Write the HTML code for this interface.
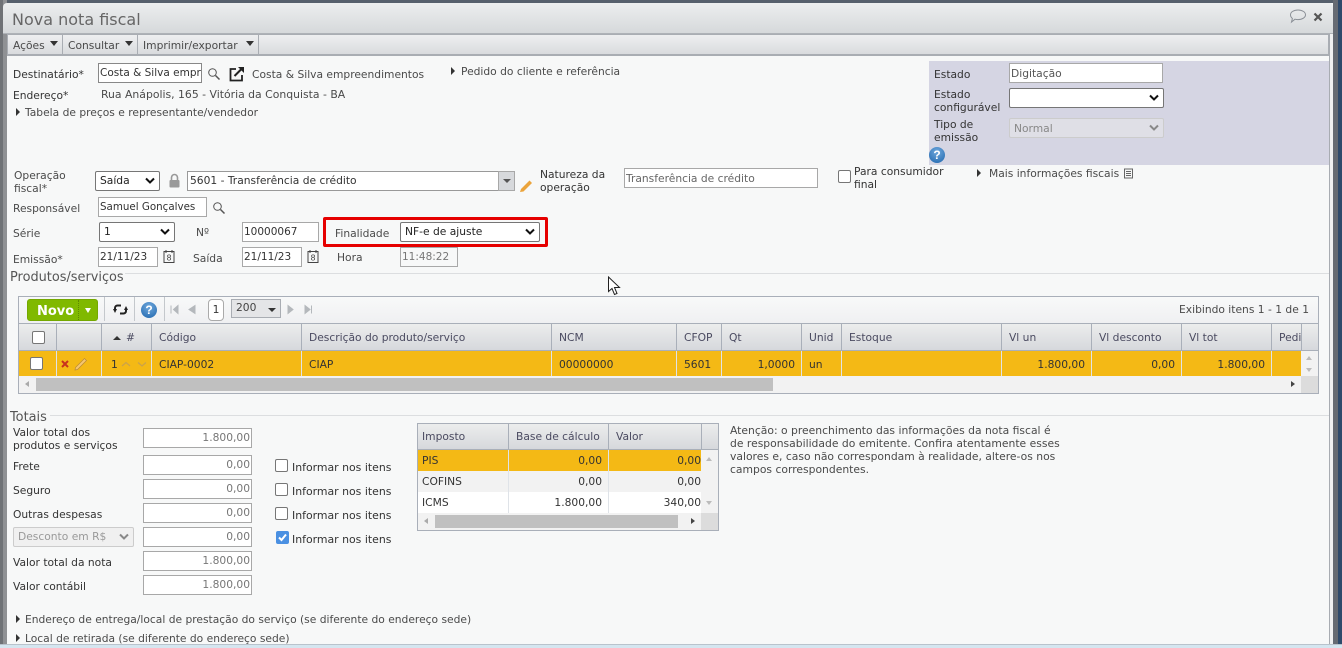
<!DOCTYPE html>
<html><head><meta charset="utf-8"><style>
html,body{margin:0;padding:0}
body{position:relative;width:1342px;height:648px;overflow:hidden;background:#f7f8f8;font:10.7px/13px "DejaVu Sans",sans-serif;color:#333}
div,span,svg{position:absolute;box-sizing:border-box}
.t{white-space:nowrap;height:13px}
.g{color:#4a4a4a}
.f{font-size:10.9px}
.i{background:#fff;border:1px solid #a8a8a8;padding:0 0 0 1px;line-height:18px;white-space:nowrap;overflow:hidden;color:#333}
.r{text-align:right;padding:0 1px 0 0;color:#777}
.s{background:#fff;border:1px solid #767676;border-radius:2px;line-height:18px;padding-left:4px;color:#222;font-size:10.7px}
.s svg{right:4px;top:5px}
.d{background:#ececec;border:1px solid #ccc;color:#999}
.h{background:linear-gradient(#eceded,#d6d8dc);top:323px;height:28px;border-right:1px solid #a9afb9;border-top:1px solid #a9afb9;border-bottom:1px solid #a9afb9;padding:7px 0 0 7px;color:#4a4a60;white-space:nowrap;overflow:hidden}
.c{background:#f4b915;top:351px;height:25px;border-right:1px solid #dfe3e8;padding:7px 6px 0 7px;color:#333;white-space:nowrap;text-align:left}
.n{text-align:right}
.k{width:13px;height:13px;background:#fff;border:1px solid #767676;border-radius:2px}
.tr{width:0;height:0;border-left:4px solid #333;border-top:4px solid transparent;border-bottom:4px solid transparent}
</style></head><body>
<!-- window frame -->
<div style="left:0;top:0;width:1342px;height:3px;background:#56606c"></div>
<div style="left:0;top:0;width:3px;height:648px;background:#6f7276"></div>
<div style="left:3px;top:0;width:4px;height:648px;background:#8f9194"></div>
<div style="left:1333px;top:0;width:5px;height:648px;background:#666b73"></div>
<div style="left:1338px;top:0;width:4px;height:648px;background:#2f4a6b"></div>
<div style="left:1329px;top:34px;width:4px;height:614px;background:#f0f1f2;border-left:1px solid #a8acb2"></div>
<div style="left:3px;top:3px;width:1330px;height:31px;background:linear-gradient(#eceeef,#d6d9db);border-radius:4px 4px 0 0;border-bottom:1px solid #aeb2b7"></div>
<div class="t" style="left:12px;top:10px;font-size:16px;line-height:19px;height:19px;color:#666">Nova nota fiscal</div>
<svg style="left:1289px;top:9px" width="18" height="15" viewBox="0 0 18 15"><path d="M9 1c4.300 0 7.500 2.100 7.500 4.800S13.300 10.600 9 10.600c-1 0-2-.1-3-.4L2.500 13l.9-3.500C2.200 8.600 1.500 7.400 1.500 5.800 1.500 3.100 4.700 1 9 1z" fill="none" stroke="#8a8f96"/></svg>
<svg style="left:1313px;top:12px" width="10" height="10" viewBox="0 0 10 10"><path d="M1.500 1.500l7 7M8.500 1.500l-7 7" stroke="#555" stroke-width="2.200"/></svg>
<!-- toolbar -->
<div style="left:7px;top:34px;width:1322px;height:22px;background:linear-gradient(#eeeff0,#d9dbde);border:1px solid #a9adb3;border-bottom:2px solid #a9adb3"></div>
<div style="left:62px;top:35px;width:1px;height:19px;background:#a9adb3"></div>
<div style="left:137px;top:35px;width:1px;height:19px;background:#a9adb3"></div>
<div style="left:258px;top:35px;width:1px;height:19px;background:#a9adb3"></div>
<div class="t g" style="left:13px;top:39px">Ações</div>
<div style="left:50px;top:41px;border-left:4px solid transparent;border-right:4px solid transparent;border-top:5px solid #333"></div>
<div class="t g" style="left:68px;top:39px">Consultar</div>
<div style="left:125px;top:41px;border-left:4px solid transparent;border-right:4px solid transparent;border-top:5px solid #333"></div>
<div class="t g" style="left:143px;top:39px">Imprimir/exportar</div>
<div style="left:246px;top:41px;border-left:4px solid transparent;border-right:4px solid transparent;border-top:5px solid #333"></div>
<!-- state panel -->
<div style="left:929px;top:61px;width:400px;height:104px;background:#d5d5e3"></div>
<div class="t" style="left:934px;top:68px">Estado</div>
<div class="i g" style="left:1009px;top:63px;width:154px;height:20px;color:#555;line-height:19px">Digitação</div>
<div class="t" style="left:934px;top:88px">Estado</div>
<div class="t" style="left:934px;top:101px">configurável</div>
<div class="s" style="left:1009px;top:88px;width:155px;height:20px"><svg width="10" height="8" viewBox="0 0 10 8"><path d="M1 1.500l4 4 4-4" fill="none" stroke="#111" stroke-width="2"/></svg></div>
<div class="t" style="left:934px;top:118px">Tipo de</div>
<div class="t" style="left:934px;top:131px">emissão</div>
<div class="s d" style="left:1009px;top:118px;width:155px;height:20px;background:#dfdfe6;color:#888;line-height:19px"><span style="position:static">Normal</span><svg width="10" height="8" viewBox="0 0 10 8"><path d="M1 1.500l4 4 4-4" fill="none" stroke="#888" stroke-width="2"/></svg></div>
<div style="left:929px;top:147px;width:16px;height:16px;border-radius:50%;background:radial-gradient(circle at 50% 30%,#6fa8dc,#1f66ad);color:#fff;font:bold 12px/16px 'Liberation Sans',sans-serif;text-align:center">?</div>
<!-- top left -->
<div class="t" style="left:13px;top:68px">Destinatário*</div>
<div class="i" style="left:98px;top:63px;width:104px;height:20px;border-color:#888;font-size:10.500px">Costa &amp; Silva empreendimentos</div>
<svg style="left:207px;top:67px" width="14" height="14" viewBox="0 0 14 14"><circle cx="5.500" cy="5.500" r="3.800" fill="none" stroke="#555" stroke-width="1"/><path d="M8.500 8.500l4 4" stroke="#555" stroke-width="1.500"/></svg>
<svg style="left:228px;top:65px" width="18" height="17" viewBox="0 0 18 17"><path d="M8 4H2.500v11.500H14V10" fill="none" stroke="#222" stroke-width="1.800"/><path d="M6.500 11L14 3.500" stroke="#222" stroke-width="2"/><path d="M10 2h6v6z" fill="#222"/></svg>
<div class="t g" style="left:252px;top:68px">Costa &amp; Silva empreendimentos</div>
<div class="tr" style="left:451px;top:67px"></div>
<div class="t g" style="left:461px;top:65px">Pedido do cliente e referência</div>
<div class="t" style="left:13px;top:89px">Endereço*</div>
<div class="t g" style="left:101px;top:88px;font-size:10.850px">Rua Anápolis, 165 - Vitória da Conquista - BA</div>
<div class="tr" style="left:16px;top:108px"></div>
<div class="t g" style="left:25px;top:106px">Tabela de preços e representante/vendedor</div>
<!-- fiscal -->
<div class="t g" style="left:14px;top:169px">Operação</div>
<div class="t g" style="left:14px;top:182px">fiscal*</div>
<div class="s" style="left:95px;top:171px;width:65px;height:20px">Saída<svg width="10" height="8" viewBox="0 0 10 8"><path d="M1 1.500l4 4 4-4" fill="none" stroke="#111" stroke-width="2"/></svg></div>
<svg style="left:168px;top:173px" width="13" height="15" viewBox="0 0 13 15"><path d="M3.500 7V4.500a3 3 0 0 1 6 0V7" fill="none" stroke="#999" stroke-width="1.600"/><rect x="1.500" y="7" width="10" height="7.500" rx="1" fill="#999"/></svg>
<div class="i" style="left:187px;top:171px;width:328px;height:20px;border-color:#999;padding-left:2px">5601 - Transferência de crédito</div>
<div style="left:498px;top:171px;width:17px;height:20px;background:#d7d9dc;border:1px solid #a8a8a8"></div>
<div style="left:503px;top:179px;border-left:4px solid transparent;border-right:4px solid transparent;border-top:4px solid #555"></div>
<svg style="left:519px;top:178px" width="15" height="15" viewBox="0 0 15 15"><path d="M2 11L10.500 2.500 13 5 4.500 13.500 1 14z" fill="#eba43c"/></svg>
<div class="t" style="left:540px;top:168px">Natureza da</div>
<div class="t" style="left:540px;top:181px">operação</div>
<div class="i g" style="left:624px;top:168px;width:194px;height:20px;color:#666;line-height:19px">Transferência de crédito</div>
<div class="k" style="left:838px;top:170px"></div>
<div class="t" style="left:854px;top:165px">Para consumidor</div>
<div class="t" style="left:854px;top:178px">final</div>
<div class="tr" style="left:977px;top:169px"></div>
<div class="t g" style="left:989px;top:167px">Mais informações fiscais</div>
<svg style="left:1123px;top:168px" width="11" height="11" viewBox="0 0 11 11"><path d="M1.500 1h8v9h-8zM3 3.500h5M3 5.500h5M3 7.500h5" fill="none" stroke="#666"/></svg>
<div class="t g" style="left:13px;top:202px">Responsável</div>
<div class="i" style="left:98px;top:197px;width:109px;height:20px;font-size:10.300px">Samuel Gonçalves</div>
<svg style="left:212px;top:201px" width="14" height="14" viewBox="0 0 14 14"><circle cx="5.500" cy="5.500" r="3.800" fill="none" stroke="#555" stroke-width="1"/><path d="M8.500 8.500l4 4" stroke="#555" stroke-width="1.500"/></svg>
<div class="t g" style="left:13px;top:227px">Série</div>
<div class="s" style="left:99px;top:222px;width:76px;height:20px">1<svg width="10" height="8" viewBox="0 0 10 8"><path d="M1 1.500l4 4 4-4" fill="none" stroke="#111" stroke-width="2"/></svg></div>
<div class="t g" style="left:196px;top:226px">Nº</div>
<div class="i" style="left:242px;top:222px;width:77px;height:20px;font-size:10.500px">10000067</div>
<div style="left:323px;top:217px;width:225px;height:30px;border:3px solid #e60000;border-radius:2px"></div>
<div class="t g" style="left:335px;top:227px">Finalidade</div>
<div class="s" style="left:400px;top:222px;width:140px;height:20px">NF-e de ajuste<svg width="10" height="8" viewBox="0 0 10 8"><path d="M1 1.500l4 4 4-4" fill="none" stroke="#111" stroke-width="2"/></svg></div>
<div class="t g" style="left:13px;top:253px">Emissão*</div>
<div class="i" style="left:98px;top:247px;width:60px;height:20px;font-size:10.500px">21/11/23</div>
<svg style="left:163px;top:249px" width="12" height="14" viewBox="0 0 12 14"><path d="M1 2.500h10v11H1zM3 1v3M9 1v3" fill="none" stroke="#444"/><text x="6" y="11.500" font-size="8" text-anchor="middle" fill="#444" font-family="DejaVu Sans">8</text></svg>
<div class="t g" style="left:193px;top:252px">Saída</div>
<div class="i" style="left:242px;top:247px;width:60px;height:20px;font-size:10.500px">21/11/23</div>
<svg style="left:307px;top:249px" width="12" height="14" viewBox="0 0 12 14"><path d="M1 2.500h10v11H1zM3 1v3M9 1v3" fill="none" stroke="#444"/><text x="6" y="11.500" font-size="8" text-anchor="middle" fill="#444" font-family="DejaVu Sans">8</text></svg>
<div class="t g" style="left:337px;top:251px">Hora</div>
<div class="i" style="left:400px;top:247px;width:58px;height:20px;color:#777;background:#f7f8f8;font-size:10.500px">11:48:22</div>
<!-- Produtos -->
<div style="left:125px;top:273px;width:1204px;height:1px;background:#dcdee0"></div>
<div class="t" style="left:10px;top:270px;font-size:12.900px;height:15px;line-height:15px;color:#555">Produtos/serviços</div>
<svg style="left:607px;top:276px" width="15" height="20" viewBox="0 0 15 20"><path d="M1.500 1v14.500l3.500-3 2.500 6 2.500-1-2.500-6h5z" fill="#fff" stroke="#222"/></svg>
<!-- grid -->
<div style="left:18px;top:296px;width:1301px;height:98px;background:#f2f2f2;border:1px solid #a9afb9"></div>
<div style="left:19px;top:297px;width:1299px;height:26px;background:linear-gradient(#f8f9f9,#eff0f2)"></div>
<div style="left:27px;top:299px;width:71px;height:22px;background:#80b900;border:1px solid #74a800;border-radius:3px;color:#fff;font:bold 13px/24px 'DejaVu Sans',sans-serif;padding-left:9px">Novo</div>
<div style="left:78px;top:300px;width:1px;height:20px;border-left:1px dotted #5e8a00"></div>
<div style="left:85px;top:308px;border-left:3px solid transparent;border-right:3px solid transparent;border-top:5px solid #fff"></div>
<div style="left:104px;top:297px;width:1px;height:24px;background:#c4c8cc"></div>
<div style="left:134px;top:297px;width:1px;height:24px;background:#c4c8cc"></div>
<div style="left:164px;top:297px;width:1px;height:24px;background:#c4c8cc"></div>
<svg style="left:113px;top:303px" width="15" height="13" viewBox="0 0 15 13"><path d="M2 7V5a2.500 2.500 0 0 1 2.500-2.500H8M13 6v2a2.500 2.500 0 0 1-2.500 2.500H7" fill="none" stroke="#222" stroke-width="2"/><path d="M0 6h4L2 10zM11 7h4L13 3z" fill="#222"/></svg>
<div style="left:141px;top:302px;width:16px;height:16px;border-radius:50%;background:radial-gradient(circle at 50% 30%,#6fa8dc,#1f66ad);color:#fff;font:bold 12px/16px 'Liberation Sans',sans-serif;text-align:center">?</div>
<svg style="left:170px;top:304px" width="26" height="11" viewBox="0 0 26 11"><path d="M1 1.500v8M8 1.500v8L3.500 5.500zM25 1.500v8L19 5.500z" fill="#b4b8bc" stroke="#b4b8bc"/></svg>
<div style="left:208px;top:299px;width:16px;height:22px;background:#fff;border:1px solid #aaa;border-radius:4px;text-align:center;line-height:20px">1</div>
<div style="left:231px;top:299px;width:50px;height:19px;background:#e4e5e7;border:1px solid #a9adb3;line-height:15px;padding-left:4px;color:#444">200</div>
<div style="left:268px;top:308px;border-left:4px solid transparent;border-right:4px solid transparent;border-top:4px solid #333"></div>
<svg style="left:287px;top:304px" width="26" height="11" viewBox="0 0 26 11"><path d="M1 1.500v8L6 5.500zM18 1.500v8L23 5.500zM24.500 1.500v8" fill="#b4b8bc" stroke="#b4b8bc"/></svg>
<div class="t g" style="left:1168px;top:303px;width:141px;text-align:right">Exibindo itens 1 - 1 de 1</div>
<!-- header -->
<div class="h" style="left:19px;width:38px"></div>
<div class="k" style="left:32px;top:331px"></div>
<div class="h" style="left:57px;width:45px"></div>
<div class="h" style="left:102px;width:50px;padding-left:24px">#</div>
<div style="left:113px;top:336px;border-left:4px solid transparent;border-right:4px solid transparent;border-bottom:4px solid #333"></div>
<div class="h" style="left:152px;width:150px">Código</div>
<div class="h" style="left:302px;width:250px">Descrição do produto/serviço</div>
<div class="h" style="left:552px;width:125px">NCM</div>
<div class="h" style="left:677px;width:45px">CFOP</div>
<div class="h" style="left:722px;width:80px">Qt</div>
<div class="h" style="left:802px;width:40px">Unid</div>
<div class="h" style="left:842px;width:160px">Estoque</div>
<div class="h" style="left:1002px;width:90px">Vl un</div>
<div class="h" style="left:1092px;width:90px">Vl desconto</div>
<div class="h" style="left:1182px;width:90px">Vl tot</div>
<div class="h" style="left:1272px;width:30px">Pedi</div>
<div class="h" style="left:1302px;width:16px;border-right:0"></div>
<!-- row -->
<div class="c" style="left:19px;width:38px"></div>
<div class="k" style="left:30px;top:357px"></div>
<div class="c" style="left:57px;width:45px"></div>
<svg style="left:61px;top:360px" width="8" height="8" viewBox="0 0 8 8"><path d="M1 1l6 6M7 1L1 7" stroke="#c8321e" stroke-width="2"/></svg>
<svg style="left:74px;top:357px" width="14" height="14" viewBox="0 0 14 14"><path d="M1.500 10.500L10.500 1.500l2 2L3.500 12.500 1 13z" fill="#f6c66f" stroke="#b98a35" stroke-width=".7"/></svg>
<div class="c" style="left:102px;width:50px;padding-left:9px">1</div>
<svg style="left:121px;top:361px" width="26" height="6" viewBox="0 0 26 6"><path d="M1 5l4-3.500L9 5M17 1.500L21 5l4-3.500" fill="none" stroke="#c9a24d" stroke-width="1.200"/></svg>
<div class="c" style="left:152px;width:150px">CIAP-0002</div>
<div class="c" style="left:302px;width:250px">CIAP</div>
<div class="c" style="left:552px;width:125px">00000000</div>
<div class="c" style="left:677px;width:45px">5601</div>
<div class="c n" style="left:722px;width:80px">1,0000</div>
<div class="c" style="left:802px;width:40px">un</div>
<div class="c" style="left:842px;width:160px"></div>
<div class="c n" style="left:1002px;width:90px">1.800,00</div>
<div class="c n" style="left:1092px;width:90px">0,00</div>
<div class="c n" style="left:1182px;width:90px">1.800,00</div>
<div class="c" style="left:1272px;width:29px;border-right:0"></div>
<div style="left:1306px;top:356px;border-left:3.500px solid transparent;border-right:3.500px solid transparent;border-bottom:4px solid #bbb"></div>
<div style="left:1306px;top:368px;border-left:3.500px solid transparent;border-right:3.500px solid transparent;border-top:4px solid #bbb"></div>
<div style="left:36px;top:378px;width:737px;height:13px;background:#c0c0c0"></div>
<div style="left:25px;top:381px;border-right:4px solid #aaa;border-top:3.500px solid transparent;border-bottom:3.500px solid transparent"></div>
<div style="left:1291px;top:381px;border-left:4px solid #444;border-top:3.500px solid transparent;border-bottom:3.500px solid transparent"></div>
<div style="left:1301px;top:376px;width:17px;height:17px;background:#dcdcdc"></div>
<!-- Totais -->
<div style="left:50px;top:415px;width:1279px;height:1px;background:#dcdee0"></div>
<div class="t" style="left:10px;top:410px;font-size:12.900px;height:15px;line-height:15px;color:#555">Totais</div>
<div class="t" style="left:13px;top:426px">Valor total dos</div>
<div class="t" style="left:13px;top:439px">produtos e serviços</div>
<div class="t" style="left:13px;top:460px">Frete</div>
<div class="t" style="left:13px;top:484px">Seguro</div>
<div class="t" style="left:13px;top:508px">Outras despesas</div>
<div class="t" style="left:13px;top:556px">Valor total da nota</div>
<div class="t" style="left:13px;top:580px">Valor contábil</div>
<div class="i r" style="left:143px;top:428px;width:109px;height:20px">1.800,00</div>
<div class="i r" style="left:143px;top:455px;width:109px;height:20px">0,00</div>
<div class="i r" style="left:143px;top:479px;width:109px;height:20px">0,00</div>
<div class="i r" style="left:143px;top:503px;width:109px;height:20px">0,00</div>
<div class="s d" style="left:13px;top:527px;width:121px;height:20px;background:#f0f0f0">Desconto em R$<svg width="10" height="8" viewBox="0 0 10 8"><path d="M1 1.500l4 4 4-4" fill="none" stroke="#888" stroke-width="2"/></svg></div>
<div class="i r" style="left:143px;top:527px;width:109px;height:20px">0,00</div>
<div class="i r" style="left:143px;top:551px;width:109px;height:20px">1.800,00</div>
<div class="i r" style="left:143px;top:575px;width:109px;height:20px">1.800,00</div>
<div class="k" style="left:275px;top:459px"></div><div class="t f" style="left:292px;top:461px">Informar nos itens</div>
<div class="k" style="left:275px;top:483px"></div><div class="t f" style="left:292px;top:485px">Informar nos itens</div>
<div class="k" style="left:275px;top:507px"></div><div class="t f" style="left:292px;top:509px">Informar nos itens</div>
<div class="k" style="left:276px;top:531px;background:#4a90e2;border-color:#4a90e2"></div>
<svg style="left:276px;top:531px" width="13" height="13" viewBox="0 0 13 13"><path d="M3 6.500l2.500 2.500L10 3.500" fill="none" stroke="#fff" stroke-width="2"/></svg>
<div class="t f" style="left:292px;top:533px">Informar nos itens</div>
<!-- tax grid -->
<div style="left:417px;top:423px;width:302px;height:108px;background:#f2f2f2;border:1px solid #a9afb9"></div>
<div class="h" style="left:418px;top:424px;width:91px;height:26px;border-top:0;padding-top:6px;padding-left:4px">Imposto</div>
<div class="h" style="left:509px;top:424px;width:100px;height:26px;border-top:0;padding-top:6px">Base de cálculo</div>
<div class="h" style="left:609px;top:424px;width:93px;height:26px;border-top:0;padding-top:6px">Valor</div>
<div class="h" style="left:702px;top:424px;width:16px;height:26px;border:0;border-bottom:1px solid #a9afb9"></div>
<div class="c" style="left:418px;top:450px;width:91px;height:21px;padding:4px 4px 0">PIS</div>
<div class="c n" style="left:509px;top:450px;width:100px;height:21px;padding:4px 6px 0 0">0,00</div>
<div class="c n" style="left:609px;top:450px;width:92px;height:21px;padding:4px 0 0 0;border:0">0,00</div>
<div class="c" style="left:418px;top:471px;width:91px;height:21px;padding:4px 4px 0;background:#f2f2f2">COFINS</div>
<div class="c n" style="left:509px;top:471px;width:100px;height:21px;padding:4px 6px 0 0;background:#f2f2f2">0,00</div>
<div class="c n" style="left:609px;top:471px;width:92px;height:21px;padding:4px 0 0 0;background:#f2f2f2;border:0">0,00</div>
<div class="c" style="left:418px;top:492px;width:91px;height:21px;padding:4px 4px 0;background:#fff">ICMS</div>
<div class="c n" style="left:509px;top:492px;width:100px;height:21px;padding:4px 6px 0 0;background:#fff">1.800,00</div>
<div class="c n" style="left:609px;top:492px;width:92px;height:21px;padding:4px 0 0 0;background:#fff;border:0">340,00</div>
<div style="left:435px;top:515px;width:243px;height:13px;background:#c0c0c0"></div>
<div style="left:424px;top:518px;border-right:4px solid #aaa;border-top:3.500px solid transparent;border-bottom:3.500px solid transparent"></div>
<div style="left:691px;top:518px;border-left:4px solid #444;border-top:3.500px solid transparent;border-bottom:3.500px solid transparent"></div>
<div style="left:701px;top:513px;width:17px;height:17px;background:#dcdcdc"></div>
<div style="left:706px;top:457px;border-left:3.500px solid transparent;border-right:3.500px solid transparent;border-bottom:4px solid #bbb"></div>
<div style="left:706px;top:501px;border-left:3.500px solid transparent;border-right:3.500px solid transparent;border-top:4px solid #bbb"></div>
<div class="t g" style="left:730px;top:424px;font-size:10.780px">Atenção: o preenchimento das informações da nota fiscal é</div>
<div class="t g" style="left:730px;top:437px;font-size:10.780px">de responsabilidade do emitente. Confira atentamente esses</div>
<div class="t g" style="left:730px;top:450px;font-size:10.780px">valores e, caso não correspondam à realidade, altere-os nos</div>
<div class="t g" style="left:730px;top:463px;font-size:10.780px">campos correspondentes.</div>
<!-- bottom -->
<div class="tr" style="left:16px;top:615px"></div>
<div class="t g" style="left:25px;top:613px">Endereço de entrega/local de prestação do serviço (se diferente do endereço sede)</div>
<div class="tr" style="left:16px;top:634px"></div>
<div class="t g" style="left:25px;top:632px">Local de retirada (se diferente do endereço sede)</div>
<div style="left:0;top:644px;width:1342px;height:4px;background:#d5e6f0;border-top:1px solid #b9c3cc"></div>
</body></html>
